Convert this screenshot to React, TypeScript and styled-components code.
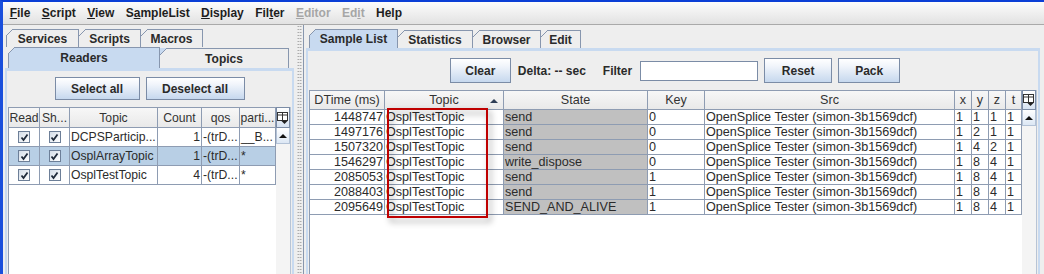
import styled, { createGlobalStyle } from 'styled-components';

const FONT = "'Liberation Sans', Arial, sans-serif";
const GRID_LINE = '#8e9cb2';
const TAB_LINE = '#8796ae';
const TAB_BLUE = '#c8daf0';

const GlobalStyle = createGlobalStyle`
  html, body {
    margin: 0;
    padding: 0;
    background: #eeeeee;
  }
  body {
    font-family: ${FONT};
    font-size: 12px;
    color: #222;
  }
  * {
    box-sizing: border-box;
  }
`;

const Window = styled.div`
  width: 1044px;
  height: 274px;
  border-top: 2px solid #0b3fd6;
  border-left: 3px solid #1a4fdc;
  background: #eeeeee;
  display: flex;
  flex-direction: column;
  overflow: hidden;
`;

const MenuBar = styled.nav`
  flex: none;
  height: 23px;
  display: flex;
  align-items: center;
  padding-left: 1px;
  background: linear-gradient(#fcfcfc, #e2e2e2);
  border-bottom: 1px solid #a9a9a9;
`;

const MenuItem = styled.span<{ $disabled?: boolean }>`
  padding: 0 5.7px;
  font: bold 12px ${FONT};
  color: ${(p) => (p.$disabled ? '#a6a6a6' : '#1e1e1e')};
  white-space: nowrap;
`;

const Main = styled.div`
  flex: 1;
  min-height: 0;
  display: flex;
`;

const Pane = styled.section<{ $w: number; $padRight: number; $edge?: boolean }>`
  flex: none;
  width: ${(p) => p.$w}px;
  display: flex;
  flex-direction: column;
  padding: 4px ${(p) => p.$padRight}px 0 2px;
  border-left: ${(p) => (p.$edge ? `1px solid ${TAB_LINE}` : 'none')};
`;

const Splitter = styled.div`
  flex: none;
  width: 7px;
  display: flex;
  justify-content: center;

  &::after {
    content: '';
    width: 5px;
    background-image: radial-gradient(circle, #9c9c9c 0.7px, transparent 0.9px);
    background-size: 2.5px 3px;
  }
`;

const TabRow = styled.div<{ $indent: number; $h: number }>`
  flex: none;
  display: flex;
  align-items: flex-end;
  height: ${(p) => p.$h}px;
  margin-left: ${(p) => p.$indent}px;
`;

const Tab = styled.div<{
  $w: number;
  $active?: boolean;
  $drop?: boolean;
  $first?: boolean;
  $corner?: string;
}>`
  position: relative;
  flex: none;
  width: ${(p) => p.$w}px;
  height: ${(p) => (p.$drop ? 'calc(100% - 1px)' : '100%')};
  display: flex;
  align-items: center;
  justify-content: center;
  border: 1px solid ${TAB_LINE};
  border-bottom: none;
  border-left-width: ${(p) => (p.$first ? 1 : 0)}px;
  background: ${(p) => (p.$active ? TAB_BLUE : '#eeeeee')};
  font: bold 12px ${FONT};
  color: #2a2a2a;
  white-space: nowrap;

  &::before {
    content: '';
    position: absolute;
    left: ${(p) => (p.$first ? -1 : 0)}px;
    top: -1px;
    width: 7px;
    height: 7px;
    background: linear-gradient(
      135deg,
      ${(p) => p.$corner ?? '#eeeeee'} 0 calc(50% - 0.7px),
      ${TAB_LINE} calc(50% - 0.7px) calc(50% + 0.7px),
      transparent calc(50% + 0.7px)
    );
  }
`;

const TabBody = styled.div`
  flex: 1;
  min-height: 0;
  display: flex;
  flex-direction: column;
  border: 2px solid ${TAB_BLUE};
  border-top-width: 3px;
  border-bottom: none;
`;

const ButtonBar = styled.div<{ $pt: number; $shift?: number }>`
  flex: none;
  display: flex;
  align-items: center;
  justify-content: center;
  gap: 6px;
  padding-top: ${(p) => p.$pt}px;
  padding-left: ${(p) => p.$shift ?? 0}px;
`;

const Button = styled.button<{ $w: number; $h: number }>`
  width: ${(p) => p.$w}px;
  height: ${(p) => p.$h}px;
  padding: 0;
  border: 1px solid #7b8ca6;
  border-radius: 0;
  background: linear-gradient(to bottom, #ffffff 0%, #f1f5fb 30%, #c6d8ee 100%);
  font: bold 12px ${FONT};
  color: #2a2a2a;
`;

const Label = styled.span<{ $ml?: number; $mr?: number }>`
  font: bold 12px ${FONT};
  color: #2a2a2a;
  margin: 0 ${(p) => p.$mr ?? 0}px 0 ${(p) => p.$ml ?? 0}px;
  white-space: nowrap;
`;

const FilterInput = styled.input`
  width: 118px;
  height: 20px;
  border: 1px solid #7b8ca6;
  background: #fff;
  padding: 0 2px;
  font: 12px ${FONT};
`;

const TableArea = styled.div<{ $mt: number; $pl: number }>`
  position: relative;
  flex: 1;
  min-height: 0;
  display: flex;
  margin-top: ${(p) => p.$mt}px;
  padding-left: ${(p) => p.$pl}px;
`;

const Grid = styled.div<{ $cols: number[] }>`
  flex: none;
  display: grid;
  grid-template-columns: ${(p) => p.$cols.map((c) => `${c}px`).join(' ')};
  align-content: start;
  border-left: 1px solid ${GRID_LINE};
  border-top: 1px solid ${GRID_LINE};
  background: #fff;
`;

const HeadCell = styled.div<{ $h: number; $size: number }>`
  position: relative;
  height: ${(p) => p.$h}px;
  display: flex;
  align-items: center;
  justify-content: center;
  border-right: 1px solid ${GRID_LINE};
  border-bottom: 1px solid ${GRID_LINE};
  background: linear-gradient(#f7f7f7, #e9e9e9);
  font: ${(p) => p.$size}px ${FONT};
  color: #333;
  white-space: nowrap;
  overflow: hidden;
`;

const SortArrow = styled.span`
  position: absolute;
  right: 5px;
  top: 8px;
  width: 0;
  height: 0;
  border-left: 4px solid transparent;
  border-right: 4px solid transparent;
  border-bottom: 4px solid #2e3e55;
`;

type Align = 'left' | 'right' | 'center';
const justify: Record<Align, string> = { left: 'flex-start', right: 'flex-end', center: 'center' };

const Cell = styled.div<{ $h: number; $size: number; $align?: Align; $bg?: string }>`
  height: ${(p) => p.$h}px;
  display: flex;
  align-items: center;
  justify-content: ${(p) => justify[p.$align ?? 'left']};
  padding: 0 1px;
  border-right: 1px solid ${GRID_LINE};
  border-bottom: 1px solid ${GRID_LINE};
  background: ${(p) => p.$bg ?? '#fff'};
  font: ${(p) => p.$size}px ${FONT};
  color: #2b2b2b;
  white-space: nowrap;
  overflow: hidden;
`;

const ScrollCol = styled.div`
  flex: none;
  width: 15px;
  display: flex;
  flex-direction: column;
  background: #f4f4f4;
  border-right: 1px solid #b7c4d6;
`;

const CornerButton = styled.div<{ $h: number }>`
  flex: none;
  height: ${(p) => p.$h}px;
  display: flex;
  align-items: center;
  justify-content: center;
  border: 1px solid #7b8ca6;
  background: linear-gradient(#ffffff, #d6e2f1);
`;

const ArrowButton = styled.div`
  flex: none;
  height: 16px;
  display: flex;
  align-items: center;
  justify-content: center;
  border: 1px solid #b3c2d6;
  border-top: none;
  background: linear-gradient(#ffffff, #dce7f4);

  &::after {
    content: '';
    border-left: 4px solid transparent;
    border-right: 4px solid transparent;
    border-bottom: 4px solid #111;
  }
`;

const CheckBox = styled.span`
  width: 12px;
  height: 12px;
  display: inline-flex;
  align-items: center;
  justify-content: center;
  border: 1px solid #6d7f98;
  background: linear-gradient(135deg, #d4dde8, #ffffff);
`;

const Highlight = styled.div`
  position: absolute;
  left: 79px;
  top: 18px;
  width: 101px;
  height: 110px;
  border: 2px solid #bf0000;
  filter: drop-shadow(3px 4px 3px rgba(0, 0, 0, 0.4));
  pointer-events: none;
`;

const ColumnIcon = () => (
  <svg width="12" height="12" viewBox="0 0 12 12">
    <rect x="0.5" y="0.5" width="10" height="8" fill="#fff" stroke="#333" />
    <line x1="0.5" y1="3" x2="10.5" y2="3" stroke="#333" />
    <line x1="5.5" y1="0.5" x2="5.5" y2="8.5" stroke="#333" />
    <path d="M4 8.5h7l-3.5 3.5z" fill="#222" />
  </svg>
);

const Check = () => (
  <CheckBox>
    <svg width="9" height="9" viewBox="0 0 9 9">
      <path d="M1.5 4.5 L3.5 7 L7.5 1.5" fill="none" stroke="#1f2a3a" strokeWidth="1.8" />
    </svg>
  </CheckBox>
);

const menus = [
  { label: 'File', u: 0 },
  { label: 'Script', u: 0 },
  { label: 'View', u: 0 },
  { label: 'SampleList', u: 1 },
  { label: 'Display', u: 0 },
  { label: 'Filter', u: 3 },
  { label: 'Editor', u: 0, disabled: true },
  { label: 'Edit', u: 2, disabled: true },
  { label: 'Help', u: -1 },
];

const readerCols = [31, 30, 88, 44, 38, 36];
const readerHeads = ['Read', 'Sh...', 'Topic', 'Count', 'qos', 'parti...'];
const readers = [
  { topic: 'DCPSParticip...', count: 1, qos: '-(trD...', part: '__B...', selected: false },
  { topic: 'OsplArrayTopic', count: 1, qos: '-(trD...', part: '*', selected: true },
  { topic: 'OsplTestTopic', count: 4, qos: '-(trD...', part: '*', selected: false },
];

const sampleCols = [75, 119, 144, 57, 250, 17, 17, 17, 16];
const sampleHeads = ['DTime (ms)', 'Topic', 'State', 'Key', 'Src', 'x', 'y', 'z', 't'];
const samples = [
  ['1448747', 'send', '0', '1', '1', '1', '1'],
  ['1497176', 'send', '0', '1', '2', '1', '1'],
  ['1507320', 'send', '0', '1', '4', '2', '1'],
  ['1546297', 'write_dispose', '0', '1', '8', '4', '1'],
  ['2085053', 'send', '1', '1', '8', '4', '1'],
  ['2088403', 'send', '1', '1', '8', '4', '1'],
  ['2095649', 'SEND_AND_ALIVE', '1', '1', '8', '4', '1'],
];

const SELECTED = '#b8cfe5';
const LEFT_SIZE = 12.2;
const RIGHT_SIZE = 12.6;

const ReadersPanel = () => (
  <TabBody>
    <ButtonBar $pt={6}>
      <Button $w={85} $h={23}>Select all</Button>
      <Button $w={99} $h={23}>Deselect all</Button>
    </ButtonBar>
    <TableArea $mt={7} $pl={1}>
      <Grid $cols={readerCols}>
        {readerHeads.map((h) => (
          <HeadCell key={h} $h={20} $size={LEFT_SIZE}>{h}</HeadCell>
        ))}
        {readers.map((r) => {
          const bg = r.selected ? SELECTED : '#fff';
          return [
            <Cell key={r.topic + 'a'} $h={19} $size={LEFT_SIZE} $align="center" $bg={bg}><Check /></Cell>,
            <Cell key={r.topic + 'b'} $h={19} $size={LEFT_SIZE} $align="center" $bg={bg}><Check /></Cell>,
            <Cell key={r.topic + 'c'} $h={19} $size={LEFT_SIZE} $bg={bg}>{r.topic}</Cell>,
            <Cell key={r.topic + 'd'} $h={19} $size={LEFT_SIZE} $align="right" $bg={bg}>{r.count}</Cell>,
            <Cell key={r.topic + 'e'} $h={19} $size={LEFT_SIZE} $bg={bg}>{r.qos}</Cell>,
            <Cell key={r.topic + 'f'} $h={19} $size={LEFT_SIZE} $bg={bg}>{r.part}</Cell>,
          ];
        })}
      </Grid>
      <ScrollCol>
        <CornerButton $h={21}><ColumnIcon /></CornerButton>
        <ArrowButton />
      </ScrollCol>
    </TableArea>
  </TabBody>
);

const SamplePanel = () => (
  <TabBody>
    <ButtonBar $pt={7} $shift={4}>
      <Button $w={61} $h={25}>Clear</Button>
      <Label $ml={1} $mr={11}>Delta: -- sec</Label>
      <Label $mr={2}>Filter</Label>
      <FilterInput />
      <Button $w={68} $h={25}>Reset</Button>
      <Button $w={62} $h={25}>Pack</Button>
    </ButtonBar>
    <TableArea $mt={7} $pl={1}>
      <Grid $cols={sampleCols}>
        {sampleHeads.map((h) => (
          <HeadCell key={h} $h={19} $size={RIGHT_SIZE}>
            {h}
            {h === 'Topic' && <SortArrow />}
          </HeadCell>
        ))}
        {samples.map(([time, state, key, x, y, z, t]) => [
          <Cell key={time + 'a'} $h={15} $size={RIGHT_SIZE} $align="right">{time}</Cell>,
          <Cell key={time + 'b'} $h={15} $size={RIGHT_SIZE}>OsplTestTopic</Cell>,
          <Cell key={time + 'c'} $h={15} $size={RIGHT_SIZE} $bg="#c0c0c0">{state}</Cell>,
          <Cell key={time + 'd'} $h={15} $size={RIGHT_SIZE}>{key}</Cell>,
          <Cell key={time + 'e'} $h={15} $size={RIGHT_SIZE}>OpenSplice Tester (simon-3b1569dcf)</Cell>,
          <Cell key={time + 'f'} $h={15} $size={RIGHT_SIZE}>{x}</Cell>,
          <Cell key={time + 'g'} $h={15} $size={RIGHT_SIZE}>{y}</Cell>,
          <Cell key={time + 'h'} $h={15} $size={RIGHT_SIZE}>{z}</Cell>,
          <Cell key={time + 'i'} $h={15} $size={RIGHT_SIZE}>{t}</Cell>,
        ])}
      </Grid>
      <ScrollCol>
        <CornerButton $h={20}><ColumnIcon /></CornerButton>
        <ArrowButton />
      </ScrollCol>
      <Highlight />
    </TableArea>
  </TabBody>
);

export default function App() {
  return (
    <>
      <GlobalStyle />
      <Window>
        <MenuBar>
          {menus.map((m) => (
            <MenuItem key={m.label} $disabled={m.disabled}>
              {m.u < 0 ? (
                m.label
              ) : (
                <>
                  {m.label.slice(0, m.u)}
                  <u>{m.label[m.u]}</u>
                  {m.label.slice(m.u + 1)}
                </>
              )}
            </MenuItem>
          ))}
        </MenuBar>
        <Main>
          <Pane $w={293} $padRight={2}>
            <TabRow $indent={1} $h={18}>
              <Tab $w={73} $first>Services</Tab>
              <Tab $w={62}>Scripts</Tab>
              <Tab $w={62}>Macros</Tab>
            </TabRow>
            <TabRow $indent={3} $h={21}>
              <Tab $w={152} $first $active>Readers</Tab>
              <Tab $w={129} $drop $corner={TAB_BLUE}>Topics</Tab>
            </TabRow>
            <ReadersPanel />
          </Pane>
          <Splitter />
          <Pane $w={741} $padRight={4} $edge>
            <TabRow $indent={3} $h={19}>
              <Tab $w={89} $first $active>Sample List</Tab>
              <Tab $w={75} $drop>Statistics</Tab>
              <Tab $w={68} $drop>Browser</Tab>
              <Tab $w={40} $drop>Edit</Tab>
            </TabRow>
            <SamplePanel />
          </Pane>
        </Main>
      </Window>
    </>
  );
}
